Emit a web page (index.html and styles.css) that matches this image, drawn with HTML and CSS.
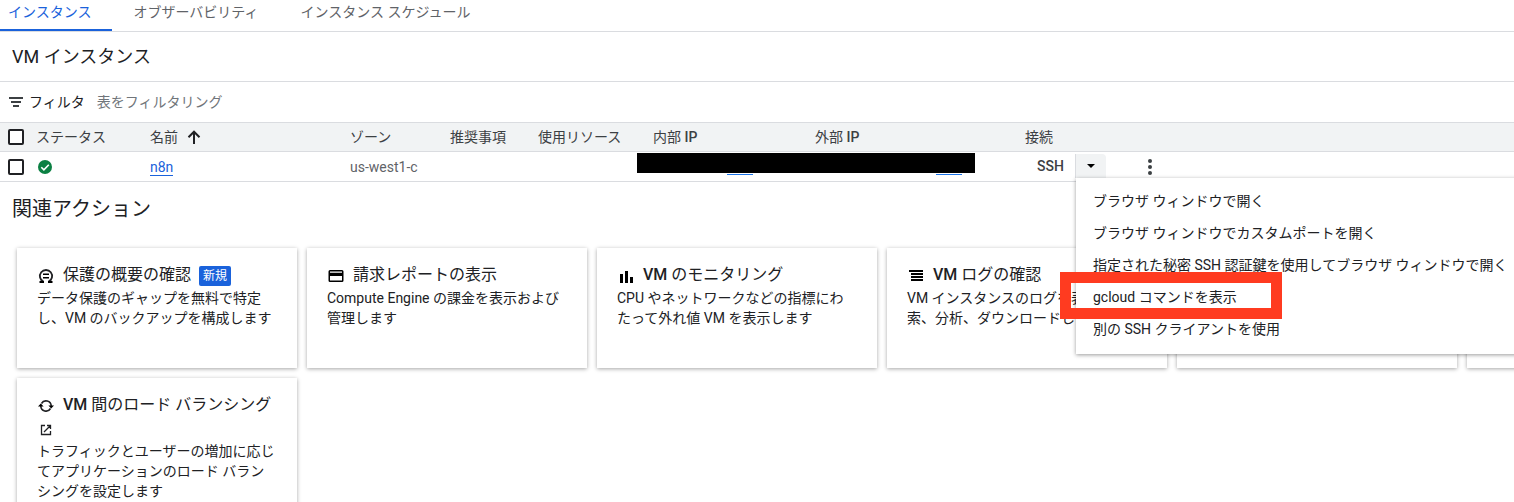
FILE: index.html
```html
<!DOCTYPE html>
<html lang="ja">
  <head>
    <title>VM インスタンス</title>
    <meta charset="utf-8">
    <meta name="viewport" content="width=device-width, initial-scale=1">
    <link rel="stylesheet" href="styles.css">
  </head>
  <body>

  <nav class="tabs">
    <a class="tab active" href="#instances">インスタンス</a>
    <a class="tab" href="#observability">オブザーバビリティ</a>
    <a class="tab" href="#schedules">インスタンス スケジュール</a>
  </nav>

  <h1 class="page-title">VM インスタンス</h1>

  <div class="filter">
    <svg class="filter-icon" width="14" height="10" viewBox="0 0 14 10"><path d="M0 0h14v2H0zM2 4h10v2H2zM4 8h6v2H4z"/></svg>
    <label for="filter">フィルタ</label>
    <input id="filter" type="text" placeholder="表をフィルタリング">
  </div>

  <table class="instances">
    <colgroup>
      <col class="c-check"><col class="c-status"><col class="c-name"><col class="c-zone">
      <col class="c-rec"><col class="c-use"><col class="c-int"><col class="c-ext">
      <col class="c-connect"><col class="c-more">
    </colgroup>
    <thead>
      <tr>
        <th><input class="check" type="checkbox" aria-label="すべて選択"></th>
        <th>ステータス</th>
        <th>
          <span class="sort">名前
            <svg width="14" height="14" viewBox="0 0 14 14"><path d="M7 14V2M1.5 7.2L7 1.7l5.500 5.500" fill="none" stroke="#202124" stroke-width="2"/></svg>
          </span>
        </th>
        <th>ゾーン</th>
        <th>推奨事項</th>
        <th>使用リソース</th>
        <th>内部 <span class="medium">IP</span></th>
        <th>外部 <span class="medium">IP</span></th>
        <th>接続</th>
        <th></th>
      </tr>
    </thead>
    <tbody>
      <tr>
        <td><input class="check" type="checkbox" aria-label="n8n"></td>
        <td>
          <svg class="status" width="14" height="14" viewBox="0 0 14 14"><circle cx="7" cy="7" r="7" fill="#0b8043"/><path d="M3.300 7.200l2.600 2.600 4.900-5" fill="none" stroke="#fff" stroke-width="1.600"/></svg>
        </td>
        <td><a class="vm-link" href="#n8n">n8n</a></td>
        <td>us-west1-c</td>
        <td></td>
        <td></td>
        <td class="ip"><div class="redacted"><i class="nic"></i><i class="nic"></i></div></td>
        <td></td>
        <td class="connect">
          <div class="ssh">
            <button class="ssh-open" type="button">SSH</button>
            <div class="ssh-more">
              <button class="ssh-toggle" type="button" aria-label="接続オプション">
                <svg width="8" height="4" viewBox="0 0 8 4"><path d="M0 0h8L4 4z"/></svg>
              </button>
              <div class="menu">
                <button type="button">ブラウザ ウィンドウで開く</button>
                <button type="button">ブラウザ ウィンドウでカスタムポートを開く</button>
                <button type="button">指定された秘密 SSH 認証鍵を使用してブラウザ ウィンドウで開く</button>
                <button class="marked" type="button">gcloud コマンドを表示</button>
                <button type="button">別の SSH クライアントを使用</button>
              </div>
            </div>
          </div>
        </td>
        <td>
          <button class="kebab" type="button" aria-label="その他の操作">
            <svg width="4" height="16" viewBox="0 0 4 16"><circle cx="2" cy="2" r="2"/><circle cx="2" cy="8" r="2"/><circle cx="2" cy="14" r="2"/></svg>
          </button>
        </td>
      </tr>
    </tbody>
  </table>

  <h2 class="section-title">関連アクション</h2>

  <div class="cards">
    <a class="card" href="#protect">
      <h3>
        <svg class="icon" width="16" height="16" viewBox="0 0 16 16"><path d="M5.400 13.600A6.100 6.100 0 1 1 10.600 13.600" fill="none" stroke="#202124" stroke-width="1.800"/><path d="M1.500 13h4.500v2H1.500zM10 13h4.500v2H10zM5 5.500h6V7H5zM5 9h6v1.500H5z"/></svg>
        <span class="card-title">保護の概要の確認</span>
        <span class="badge">新規</span>
      </h3>
      <p>データ保護のギャップを無料で特定し、VM のバックアップを構成します</p>
    </a>
    <a class="card" href="#billing">
      <h3>
        <svg class="icon" width="16" height="16" viewBox="0 0 16 16"><path fill-rule="evenodd" d="M2 2h12a1.500 1.500 0 0 1 1.500 1.500v9A1.500 1.500 0 0 1 14 14H2a1.500 1.500 0 0 1-1.500-1.500v-9A1.500 1.500 0 0 1 2 2zM2 3.500v1.300h12V3.500zM2 8v4.500h12V8z"/></svg>
        <span class="card-title">請求レポートの表示</span>
      </h3>
      <p>Compute Engine の課金を表示および管理します</p>
    </a>
    <a class="card" href="#monitoring">
      <h3>
        <svg class="icon" width="16" height="16" viewBox="0 0 16 16"><path d="M2 6h3v9H2zM7 3h3v12H7zM12 9h3v6h-3z"/></svg>
        <span class="card-title"><span class="medium">VM</span> のモニタリング</span>
      </h3>
      <p>CPU やネットワークなどの指標にわたって外れ値 VM を表示します</p>
    </a>
    <a class="card" href="#logs">
      <h3>
        <svg class="icon" width="16" height="16" viewBox="0 0 16 16"><path d="M1 2h14v2H1zM3 5h12v2H3zM3 8h12v2H3zM3 11h12v2H3z"/></svg>
        <span class="card-title"><span class="medium">VM</span> ログの確認</span>
      </h3>
      <p>VM インスタンスのログを表示、検索、分析、ダウンロードします</p>
    </a>
    <a class="card" href="#firewall"></a>
    <a class="card" href="#patch"></a>
    <a class="card" href="#balancing">
      <h3>
        <svg class="icon" width="16" height="16" viewBox="0 0 16 16"><path d="M3.500 5.500A5.200 5.200 0 0 1 13.200 8M12.500 10.500A5.200 5.200 0 0 1 2.800 8" fill="none" stroke="#202124" stroke-width="1.600"/><path d="M10.400 7.500H16L13.200 10.500zM0 8.500h5.600L2.800 5.500z"/></svg>
        <span class="card-title"><span class="medium">VM</span> 間のロード バランシング</span>
      </h3>
      <svg class="external" width="12" height="12" viewBox="0 0 12 12"><path d="M5 1.500H1.500v9h9V7M7 1.500h3.500V5M10.300 1.700L4 8" fill="none" stroke="#202124" stroke-width="1.300"/></svg>
      <p>トラフィックとユーザーの増加に応じてアプリケーションのロード バランシングを設定します</p>
    </a>
  </div>

  </body>
</html>
```

FILE: styles.css
```css
html {
  height: 100%;
}
body {
  margin: 0;
  height: 100%;
  overflow: hidden;
  background: #fff;
  color: #202124;
  font-family: Roboto, "Noto Sans CJK JP", sans-serif;
  font-size: 14px;
  line-height: 20px;
}

button, input {
  font: inherit;
  color: inherit;
}
button {
  border: 0;
  padding: 0;
  background: none;
  cursor: pointer;
}
svg {
  display: block;
  flex: none;
}

.medium {
  font-weight: 500;
}

/* tabs */
.tabs {
  display: flex;
  height: 31px;
  border-bottom: 1px solid #dadce0;
}
.tab {
  box-sizing: border-box;
  height: 31px;
  padding: 2px 21px 0;
  color: #5f6368;
  text-decoration: none;
}
.tab.active {
  padding-left: 8px;
  border-bottom: 2px solid #1a62db;
  color: #1a62db;
}

.page-title {
  margin: 0;
  padding: 12px;
  border-bottom: 1px solid #dadce0;
  font-size: 18px;
  font-weight: 400;
  line-height: 25px;
}

/* filter bar */
.filter {
  display: flex;
  align-items: center;
  height: 40px;
  padding-left: 9px;
}
.filter-icon {
  margin-right: 6px;
  fill: #3c4043;
}
.filter input {
  flex: 1;
  margin-left: 12px;
  padding: 0;
  border: 0;
  outline: 0;
}
.filter input::placeholder {
  color: #70757a;
}

/* instance table */
.instances {
  width: 100%;
  table-layout: fixed;
  border-collapse: collapse;
}
.c-check { width: 36px; }
.c-status { width: 114px; }
.c-name { width: 200px; }
.c-zone { width: 100px; }
.c-rec { width: 88px; }
.c-use { width: 115px; }
.c-int { width: 162px; }
.c-ext { width: 210px; }
.c-connect { width: 120px; }

.instances th,
.instances td {
  box-sizing: border-box;
  height: 29px;
  padding: 0;
  border-bottom: 1px solid #dadce0;
  text-align: left;
  font-weight: 400;
  white-space: nowrap;
}
.instances th {
  border-top: 1px solid #dadce0;
  background: #f1f3f4;
  color: #3c4043;
}
.instances td {
  height: 30px;
  color: #5f6368;
}
.check {
  display: block;
  box-sizing: border-box;
  width: 16px;
  height: 16px;
  margin: 0 0 0 8px;
  appearance: none;
  border: 2px solid #202124;
  border-radius: 2px;
  background: #fff;
}
.sort {
  display: flex;
  align-items: center;
  gap: 9px;
}
.status {
  margin-left: 2px;
}
.vm-link {
  border-bottom: 1px solid #1a62db;
  color: #1a62db;
  text-decoration: none;
}

.ip {
  position: relative;
}
.redacted {
  position: absolute;
  top: 1px;
  left: -16px;
  box-sizing: border-box;
  width: 338px;
  height: 20px;
  padding: 0 13px 0 90px;
  display: flex;
  justify-content: space-between;
  background: #000;
}
.nic {
  width: 26px;
  height: 21px;
  border-bottom: 1px solid #1a73e8;
}

/* SSH button and its menu */
.instances .connect {
  padding-top: 2px;
  vertical-align: top;
}
.ssh {
  display: flex;
  align-items: center;
  height: 24px;
  padding-left: 12px;
}
.ssh-open {
  width: 38px;
  text-align: left;
  color: #3c4043;
  font-weight: 500;
}
.ssh-more {
  position: relative;
}
.ssh-toggle {
  display: flex;
  align-items: center;
  justify-content: center;
  width: 31px;
  height: 24px;
  border-left: 1px solid #dadce0;
  border-radius: 0 4px 0 0;
  background: #f1f3f4;
}
.menu {
  position: absolute;
  z-index: 2;
  top: 24px;
  left: 1px;
  padding: 8px 0;
  background: #fff;
  box-shadow: 0 1px 4px rgba(0,0,0,0.4);
}
.menu button {
  display: block;
  width: 100%;
  height: 32px;
  padding: 0 24px 2px 17px;
  text-align: left;
  color: #202124;
}
.menu .marked {
  position: relative;
}
.marked::after {
  content: "";
  position: absolute;
  top: -10px;
  left: -16px;
  box-sizing: border-box;
  width: 222px;
  height: 47px;
  border: 11px solid #ff3b20;
}
.kebab {
  display: block;
  margin-left: 3px;
  fill: #3c4043;
}

/* related actions */
.section-title {
  margin: 0;
  padding: 12px 12px 24px;
  font-size: 20px;
  font-weight: 400;
  line-height: 30px;
}
.cards {
  display: grid;
  grid-template-columns: repeat(6, 280px);
  gap: 10px;
  padding-left: 17px;
}
.card {
  box-sizing: border-box;
  min-height: 120px;
  padding: 16px 20px;
  box-shadow: 0 1px 4px rgba(0,0,0,0.35);
  color: #202124;
  text-decoration: none;
}
.card h3 {
  display: flex;
  align-items: center;
  height: 24px;
  margin: 0;
  font-size: 16px;
  font-weight: 400;
}
.card-title {
  padding-bottom: 2px;
  white-space: nowrap;
}
.card p {
  margin: 0;
}
.icon {
  margin: 0 9px 0 1px;
}
.badge {
  margin-left: 8px;
  padding: 0 4px;
  border-radius: 2px;
  background: #1a62db;
  color: #fff;
  font-size: 12px;
  line-height: 20px;
}
.external {
  margin: 6px 3px 5px;
}
```
